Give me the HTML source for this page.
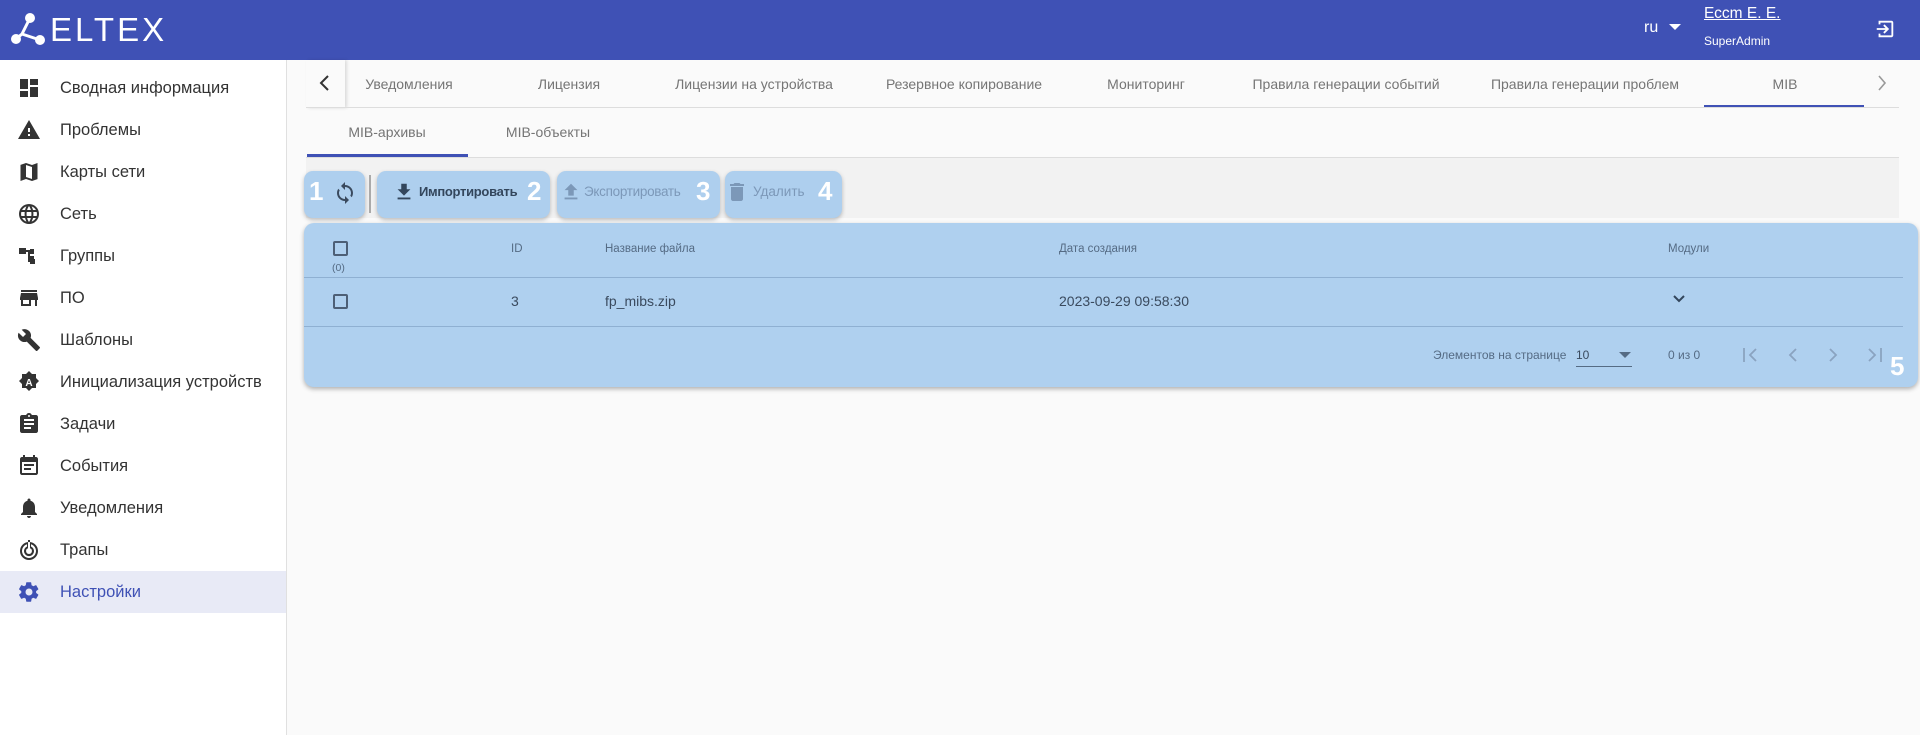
<!DOCTYPE html>
<html><head><meta charset="utf-8">
<style>
*{box-sizing:border-box;margin:0;padding:0}
body{width:1920px;height:735px;overflow:hidden;background:#fafafa;font-family:"Liberation Sans","DejaVu Sans",sans-serif;position:relative}
.hdr{position:absolute;left:0;top:0;width:1920px;height:60px;background:#3f51b5;color:#fff}
.abs{position:absolute}
.side{position:absolute;left:0;top:60px;width:287px;height:675px;background:#fff;border-right:1px solid #e0e0e0}
.item{position:absolute;left:0;width:286px;height:42px;display:flex;align-items:center;font-size:16.5px;color:#333}
.item svg{position:absolute;left:17px;width:24px;height:24px;fill:#333}
.item span{position:absolute;left:60px}
.tab{position:absolute;top:76px;font-size:14px;color:#757575;transform:translateX(-50%);white-space:nowrap}
.btn{position:absolute;top:171px;height:47px;background:#aecfee;border-radius:9px;box-shadow:0 2px 4px rgba(0,0,0,.25)}
.num{position:absolute;color:#fff;font-weight:bold;font-size:26px}
.th{position:absolute;font-size:11.5px;color:#556b84}
.td{position:absolute;font-size:14px;color:#3a4a5e}
.cb{position:absolute;width:15px;height:15px;border:2px solid #4d5f76;border-radius:2px}
</style></head><body>
<div class="hdr">
 <svg class="abs" style="left:10px;top:12px" width="36" height="34" viewBox="0 0 36 34"><g fill="#fff" stroke="#fff"><circle cx="20" cy="6" r="5" stroke="none"/><circle cx="6" cy="27" r="5" stroke="none"/><circle cx="30" cy="28" r="5" stroke="none"/><path d="M20 6 L12 22 M12 22 L6 27 M12 22 L30 28" stroke-width="3" fill="none"/></g></svg>
 <div class="abs" style="left:50px;top:11px;font-size:33px;letter-spacing:3px;color:#fff">ELTEX</div>
 <div class="abs" style="left:1644px;top:19px;font-size:16px">ru</div>
 <svg class="abs" style="left:1669px;top:24px" width="12" height="7"><path d="M0 0 L12 0 L6 6Z" fill="#fff"/></svg>
 <div class="abs" style="left:1704px;top:5px;font-size:15.5px;text-decoration:underline">Ессm Е. Е.</div>
 <div class="abs" style="left:1704px;top:34px;font-size:12px">SuperAdmin</div>
 <svg class="abs" style="left:1874px;top:18px" width="22" height="22" viewBox="0 0 24 24"><path d="M10.09 15.59L11.5 17l5-5-5-5-1.41 1.41L12.67 11H3v2h9.67l-2.58 2.59zM19 3H5v4h2V5h12v14H7v-2H5v4h14c1.1 0 2-.9 2-2V5c0-1.1-.9-2-2-2z" fill="#fff"/></svg>
</div>

<div class="side">
 <div class="item" style="top:7px"><svg viewBox="0 0 24 24"><path d="M3 13h8V3H3v10zm0 8h8v-6H3v6zm10 0h8V11h-8v10zm0-18v6h8V3h-8z"/></svg><span>Сводная информация</span></div>
 <div class="item" style="top:49px"><svg viewBox="0 0 24 24"><path d="M1 21h22L12 2 1 21zm12-3h-2v-2h2v2zm0-4h-2v-4h2v4z"/></svg><span>Проблемы</span></div>
 <div class="item" style="top:91px"><svg viewBox="0 0 24 24"><path d="M20.5 3l-5.5 2-6-2-5.5 1.9V21l5.5-2 6 2 5.5-1.9V3zM15 19l-6-2V5l6 2v12z"/></svg><span>Карты сети</span></div>
 <div class="item" style="top:133px"><svg viewBox="0 0 24 24"><path d="M12 2a10 10 0 100 20 10 10 0 000-20zm6.9 6h-2.9a15.7 15.7 0 00-1.4-3.6A8 8 0 0118.9 8zM12 4c.8 1.2 1.5 2.5 1.9 4h-3.8c.4-1.4 1.1-2.8 1.9-4zM4.3 14a8 8 0 010-4h3.4a16 16 0 000 4H4.3zm.8 2h3a15.7 15.7 0 001.3 3.6A8 8 0 015.1 16zm3-8h-3a8 8 0 014.3-3.6C8.8 5.5 8.4 6.7 8.1 8zM12 20c-.8-1.2-1.5-2.5-1.9-4h3.8c-.4 1.4-1.1 2.8-1.9 4zm2.3-6H9.7a14 14 0 010-4h4.6a14 14 0 010 4zm.3 5.6c.6-1.1 1.1-2.3 1.4-3.6h2.9a8 8 0 01-4.3 3.6zm1.7-5.6a16 16 0 000-4h3.4a8 8 0 010 4h-3.4z"/></svg><span>Сеть</span></div>
 <div class="item" style="top:175px"><svg viewBox="0 0 24 24"><path d="M2 4h7v6H2zM9 6h4v2H9zM13 5h4v5h-4zM11 8h2v10h-2zM13 12h4v3h-4zM13 15h5v5h-5z"/></svg><span>Группы</span></div>
 <div class="item" style="top:217px"><svg viewBox="0 0 24 24"><path d="M20 4H4v2h16V4zm1 10v-2l-1-5H4l-1 5v2h1v6h10v-6h4v6h2v-6h1zm-9 4H6v-4h6v4z"/></svg><span>ПО</span></div>
 <div class="item" style="top:259px"><svg viewBox="0 0 24 24"><path d="M22.7 19l-9.1-9.1c.9-2.3.4-5-1.5-6.9-2-2-5-2.4-7.4-1.3L9 6 6 9 1.6 4.7C.4 7.1.9 10.1 2.9 12.1c1.9 1.9 4.6 2.4 6.9 1.5l9.1 9.1c.4.4 1 .4 1.4 0l2.3-2.3c.5-.4.5-1.1.1-1.4z"/></svg><span>Шаблоны</span></div>
 <div class="item" style="top:301px"><svg viewBox="0 0 24 24"><path d="M12 1l3 3h4v4l3 3-3 3v4h-4l-3 3-3-3H5v-4l-3-3 3-3V4h4z"/><text x="12" y="16" font-size="10" font-weight="bold" text-anchor="middle" fill="#fff" font-family="Liberation Sans">A</text></svg><span>Инициализация устройств</span></div>
 <div class="item" style="top:343px"><svg viewBox="0 0 24 24"><path d="M19 3h-4.2C14.4 1.8 13.3 1 12 1s-2.4.8-2.8 2H5c-1.1 0-2 .9-2 2v14c0 1.1.9 2 2 2h14c1.1 0 2-.9 2-2V5c0-1.1-.9-2-2-2zm-7 0c.6 0 1 .4 1 1s-.4 1-1 1-1-.4-1-1 .4-1 1-1zm2 14H7v-2h7v2zm3-4H7v-2h10v2zm0-4H7V7h10v2z"/></svg><span>Задачи</span></div>
 <div class="item" style="top:385px"><svg viewBox="0 0 24 24"><path d="M16 1v2H8V1H6v2H5c-1.1 0-2 .9-2 2v14c0 1.1.9 2 2 2h14c1.1 0 2-.9 2-2V5c0-1.1-.9-2-2-2h-1V1h-2zm3 18H5V8h14v11zM7 10h10v2H7zm0 4h7v2H7z"/></svg><span>События</span></div>
 <div class="item" style="top:427px"><svg viewBox="0 0 24 24"><path d="M12 22c1.1 0 2-.9 2-2h-4c0 1.1.9 2 2 2zm6-6v-5c0-3.1-1.6-5.6-4.5-6.3V4c0-.8-.7-1.5-1.5-1.5s-1.5.7-1.5 1.5v.7C7.6 5.4 6 7.9 6 11v5l-2 2v1h16v-1l-2-2z"/></svg><span>Уведомления</span></div>
 <div class="item" style="top:469px"><svg viewBox="0 0 24 24"><path d="M12 4a9 9 0 100 18 9 9 0 000-18zm0 16a7 7 0 01-2-13.7v2.2a5 5 0 104 0V6.3A7 7 0 0112 20zm0-4a3 3 0 01-1-5.8V13h2v-2.8A3 3 0 0112 16zM11 2h2v11h-2z"/></svg><span>Трапы</span></div>
 <div class="item" style="top:511px;background:#e8eaf6;color:#3f51b5"><svg viewBox="0 0 24 24" style="fill:#3f51b5"><path d="M19.1 12.9a7 7 0 000-1.8l2.1-1.6c.2-.1.2-.4.1-.6l-2-3.5c-.1-.2-.4-.3-.6-.2l-2.5 1a7.4 7.4 0 00-1.6-.9l-.4-2.6c0-.3-.2-.4-.5-.4h-4c-.3 0-.5.2-.5.4l-.4 2.6c-.6.2-1.1.6-1.6.9l-2.5-1c-.2-.1-.5 0-.6.2l-2 3.5c-.1.2-.1.5.1.6l2.1 1.6a7 7 0 000 1.8l-2.1 1.6c-.2.1-.2.4-.1.6l2 3.5c.1.2.4.3.6.2l2.5-1c.5.4 1 .7 1.6.9l.4 2.6c0 .3.2.4.5.4h4c.3 0 .5-.2.5-.4l.4-2.6c.6-.2 1.1-.6 1.6-.9l2.5 1c.2.1.5 0 .6-.2l2-3.5c.1-.2.1-.5-.1-.6l-2.1-1.6zM12 15.5a3.5 3.5 0 110-7 3.5 3.5 0 010 7z"/></svg><span>Настройки</span></div>
</div>

<div class="abs" style="left:306px;top:60px;width:39px;height:48px;box-shadow:2px 0 3px rgba(0,0,0,.12)"></div>
<svg class="abs" style="left:318px;top:74px" width="14" height="18" viewBox="0 0 14 18"><path d="M10 2 L3 9 L10 16" stroke="#333" stroke-width="2" fill="none"/></svg>
<div class="tab" style="left:409px">Уведомления</div>
<div class="tab" style="left:569px">Лицензия</div>
<div class="tab" style="left:754px">Лицензии на устройства</div>
<div class="tab" style="left:964px">Резервное копирование</div>
<div class="tab" style="left:1146px">Мониторинг</div>
<div class="tab" style="left:1346px">Правила генерации событий</div>
<div class="tab" style="left:1585px">Правила генерации проблем</div>
<div class="tab" style="left:1785px">MIB</div>
<div class="abs" style="left:1704px;top:105px;width:160px;height:3px;background:#3f51b5"></div>
<svg class="abs" style="left:1876px;top:74px" width="12" height="18" viewBox="0 0 12 18"><path d="M3 2 L9 9 L3 16" stroke="#999" stroke-width="1.6" fill="none"/></svg>
<div class="abs" style="left:306px;top:107px;width:1593px;height:1px;background:#ddd"></div>

<div class="tab" style="left:387px;top:124px">MIB-архивы</div>
<div class="tab" style="left:548px;top:124px">MIB-объекты</div>
<div class="abs" style="left:307px;top:154px;width:161px;height:3px;background:#3f51b5"></div>
<div class="abs" style="left:306px;top:157px;width:1593px;height:1px;background:#ddd"></div>
<div class="abs" style="left:306px;top:158px;width:1593px;height:60px;background:#f2f2f2"></div>

<div class="btn" style="left:304px;width:61px"></div>
<div class="num" style="left:309px;top:176px">1</div>
<svg class="abs" style="left:333px;top:181px" width="24" height="24" viewBox="0 0 24 24"><path d="M12 4V1L8 5l4 4V6c3.3 0 6 2.7 6 6 0 1-.3 2-.7 2.8l1.5 1.5A8 8 0 0020 12c0-4.4-3.6-8-8-8zm0 14c-3.3 0-6-2.7-6-6 0-1 .3-2 .7-2.8L5.2 7.7A8 8 0 004 12c0 4.4 3.6 8 8 8v3l4-4-4-4v3z" fill="#3a4a5e"/></svg>
<div class="abs" style="left:369px;top:175px;width:2px;height:38px;background:#aaa"></div>
<div class="btn" style="left:377px;width:173px"></div>
<svg class="abs" style="left:393px;top:181px" width="22" height="22" viewBox="0 0 24 24"><path d="M19 9h-4V3H9v6H5l7 7 7-7zM5 18v2h14v-2H5z" fill="#33465c"/></svg>
<div class="abs" style="left:419px;top:184px;font-size:13px;font-weight:bold;color:#33465c;letter-spacing:-0.3px">Импортировать</div>
<div class="num" style="left:527px;top:176px">2</div>
<div class="btn" style="left:557px;width:163px"></div>
<svg class="abs" style="left:560px;top:181px" width="22" height="22" viewBox="0 0 24 24"><path d="M9 16h6v-6h4l-7-7-7 7h4zm-4 2h14v2H5z" fill="#7c98b8"/></svg>
<div class="abs" style="left:584px;top:184px;font-size:13.5px;color:#7c98b8;letter-spacing:-0.3px">Экспортировать</div>
<div class="num" style="left:696px;top:176px">3</div>
<div class="btn" style="left:725px;width:117px"></div>
<svg class="abs" style="left:725px;top:180px" width="24" height="24" viewBox="0 0 24 24"><path d="M6 19c0 1.1.9 2 2 2h8c1.1 0 2-.9 2-2V7H6v12zM19 4h-3.5l-1-1h-5l-1 1H5v2h14V4z" fill="#7c98b8"/></svg>
<div class="abs" style="left:753px;top:184px;font-size:13.5px;color:#7c98b8">Удалить</div>
<div class="num" style="left:818px;top:176px">4</div>

<div class="abs" style="left:304px;top:223px;width:1614px;height:164px;background:#afd0ef;border-radius:10px;box-shadow:0 2px 5px rgba(0,0,0,.3)"></div>
<div class="cb" style="left:333px;top:241px"></div>
<div class="th" style="left:332px;top:262px;font-size:10.5px">(0)</div>
<div class="th" style="left:511px;top:243px">ID</div>
<div class="th" style="left:605px;top:243px">Название файла</div>
<div class="th" style="left:1059px;top:243px">Дата создания</div>
<div class="th" style="left:1668px;top:243px">Модули</div>
<div class="abs" style="left:304px;top:277px;width:1599px;height:1px;background:#8fb0d2"></div>
<div class="cb" style="left:333px;top:294px"></div>
<div class="td" style="left:511px;top:293px">3</div>
<div class="td" style="left:605px;top:293px">fp_mibs.zip</div>
<div class="td" style="left:1059px;top:293px">2023-09-29 09:58:30</div>
<svg class="abs" style="left:1672px;top:294px" width="14" height="10" viewBox="0 0 14 10"><path d="M2 2 L7 7 L12 2" stroke="#33465c" stroke-width="2" fill="none"/></svg>
<div class="abs" style="left:304px;top:326px;width:1599px;height:1px;background:#8fb0d2"></div>
<div class="th" style="left:1433px;top:348px;font-size:12px">Элементов на странице</div>
<div class="td" style="left:1576px;top:348px;font-size:12px">10</div>
<svg class="abs" style="left:1619px;top:352px" width="12" height="6"><path d="M0 0L12 0L6 6Z" fill="#556b84"/></svg>
<div class="abs" style="left:1576px;top:366px;width:56px;height:1px;background:#556b84"></div>
<div class="th" style="left:1668px;top:348px;font-size:12px">0 из 0</div>
<svg class="abs" style="left:1742px;top:346px" width="150" height="18" viewBox="0 0 150 18"><g stroke="#8aa3c0" stroke-width="1.8" fill="none"><path d="M2 2v14M14 3L8 9l6 6"/><path d="M54 3l-6 6 6 6"/><path d="M88 3l6 6-6 6"/><path d="M127 3l6 6-6 6M139 2v14"/></g></svg>
<div class="num" style="left:1890px;top:351px">5</div>
</body></html>
